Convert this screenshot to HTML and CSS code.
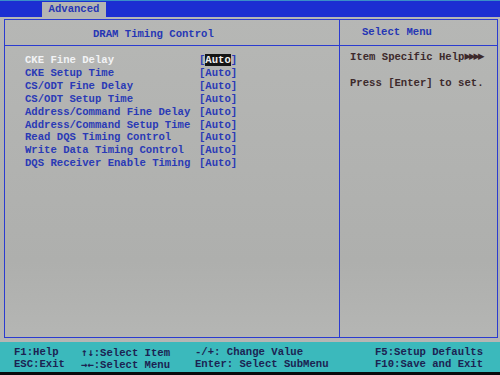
FILE: index.html
```html
<!DOCTYPE html>
<html lang="en">
<head>
    <meta charset="UTF-8">
    <meta name="viewport" content="width=device-width, initial-scale=1.0">
    <title>DRAM Timing Control</title>
    <link rel="stylesheet" href="styles.css">
</head>
<body>
    <div id="barra">
        <div class="aba">Advanced</div>
    </div>

    <div id="tela">
        <div id="painel">
            <div class="coluna esquerda">
                <div class="titulo titulo-esq">DRAM Timing Control</div>
                <ul class="itens">
                    <li class="ativo"><span class="nome">CKE Fine Delay</span><span class="valor">[<b>Auto</b>]</span></li>
                    <li><span class="nome">CKE Setup Time</span><span class="valor">[Auto]</span></li>
                    <li><span class="nome">CS/ODT Fine Delay</span><span class="valor">[Auto]</span></li>
                    <li><span class="nome">CS/ODT Setup Time</span><span class="valor">[Auto]</span></li>
                    <li><span class="nome">Address/Command Fine Delay</span><span class="valor">[Auto]</span></li>
                    <li><span class="nome">Address/Command Setup Time</span><span class="valor">[Auto]</span></li>
                    <li><span class="nome">Read DQS Timing Control</span><span class="valor">[Auto]</span></li>
                    <li><span class="nome">Write Data Timing Control</span><span class="valor">[Auto]</span></li>
                    <li><span class="nome">DQS Receiver Enable Timing</span><span class="valor">[Auto]</span></li>
                </ul>
            </div>
            <div class="coluna direita">
                <div class="titulo titulo-dir">Select Menu</div>
                <div class="ajuda">
                    <p>Item Specific Help<span class="setas">&#9654;&#9654;&#9654;&#9654;</span></p>
                    <p class="press">Press [Enter] to set.</p>
                </div>
            </div>
        </div>
    </div>

    <div id="rodape">
        <div class="bloco b1"><span>F1:Help</span><span>ESC:Exit</span></div>
        <div class="bloco b2"><span><i class="seta">&uarr;&darr;</i>:Select Item</span><span><i class="seta">&rarr;&larr;</i>:Select Menu</span></div>
        <div class="bloco b3"><span>-/+: Change Value</span><span>Enter: Select SubMenu</span></div>
        <div class="bloco b4"><span>F5:Setup Defaults</span><span>F10:Save and Exit</span></div>
    </div>
</body>
</html>
```

FILE: styles.css
```css
* {
    box-sizing: border-box;
}

body {
    margin: 0;
    width: 500px;
    height: 375px;
    background-color: #0a0a0c;
    font-family: "Liberation Mono", "DejaVu Sans Mono", monospace;
    font-size: 10.6px;
    font-weight: bold;
    overflow: hidden;
}

#barra {
    height: 17px;
    background-color: #1c2ed2;
    border-top: 1px solid #3a8ec8;
    padding-left: 42px;
    display: flex;
    align-items: flex-end;
}

.aba {
    width: 64px;
    height: 15px;
    background-color: #b4b5b3;
    color: #2636b4;
    text-align: center;
    line-height: 15px;
}

#tela {
    height: 325px;
    background: linear-gradient(#b6b7b5, #aeafad 75%, #b5b6b4);
    padding: 2px 2px 4px 4px;
}

#painel {
    height: 100%;
    border: 1.5px solid #2b3bd0;
    display: grid;
    grid-template-columns: 335px 1fr;
}

.esquerda {
    border-right: 1.5px solid #2b3bd0;
}

.titulo {
    height: 26px;
    border-bottom: 1.5px solid #2b3bd0;
    line-height: 24px;
    color: #2636b4;
}

.titulo-esq {
    padding: 2px 0 0 88px;
}

.titulo-dir {
    padding-left: 22px;
}

.itens {
    list-style: none;
    margin: 0;
    padding: 8px 0 0 20px;
}

.itens li {
    display: grid;
    grid-template-columns: 174px auto;
    line-height: 12.9px;
    color: #2a3ab6;
}

.itens li.ativo .nome {
    color: #f2f3f5;
}

.valor b {
    background-color: #151515;
    color: #f0f0f0;
}

.ajuda {
    padding: 4px 0 0 10px;
    color: #3d2a2c;
}

.ajuda p {
    margin: 0;
    line-height: 13px;
}

.ajuda .press {
    margin-top: 13px;
}

.setas {
    font-family: "DejaVu Sans", sans-serif;
    font-size: 8.5px;
    letter-spacing: -2px;
    vertical-align: 1px;
}

#rodape {
    height: 30px;
    margin-bottom: 3px;
    background-color: #3bb9bc;
    color: #1c2352;
    display: flex;
    padding: 5px 0 0 14px;
}

.bloco {
    display: flex;
    flex-direction: column;
}

.bloco span {
    display: block;
    height: 11.5px;
    line-height: 11.5px;
}

.seta {
    font-style: normal;
    font-family: "DejaVu Sans Mono", monospace;
    line-height: 1;
}

.b1 {
    width: 67px;
}

.b2 {
    width: 114px;
}

.b3 {
    width: 180px;
}
```
